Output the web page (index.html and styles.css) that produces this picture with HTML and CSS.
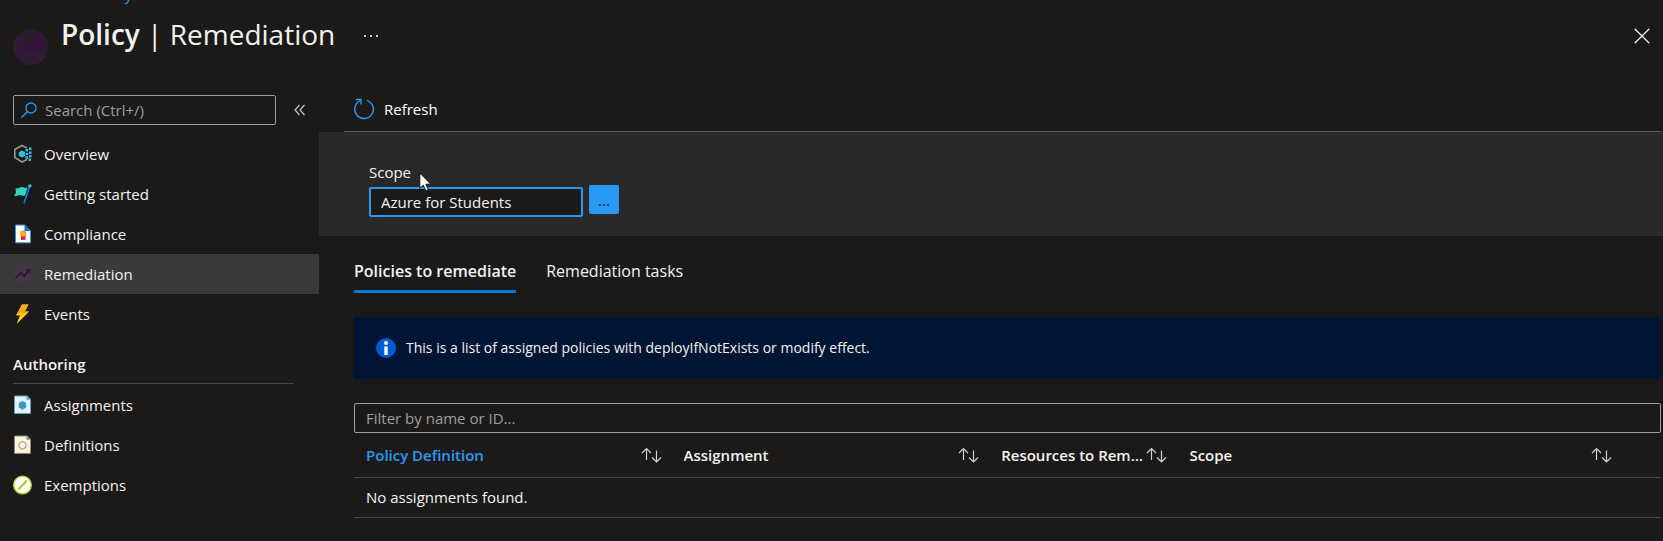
FILE: index.html
```html
<!DOCTYPE html>
<html lang="en">
<head>
<meta charset="utf-8">
<title>Policy | Remediation</title>
<link rel="stylesheet" href="styles.css">
</head>
<body>
<svg class="defs" aria-hidden="true">
  <symbol id="sort" viewBox="0 0 21 16">
    <path d="M5.5 13V1.5M1 6l4.500-4.500L10 6M15.500 3.500V15M11 10.500l4.500 4.500L20 10.500" fill="none" stroke="currentColor" stroke-width="1.200"/>
  </symbol>
</svg>
<div class="page">
  <nav class="crumbs" aria-label="Breadcrumb">
    <a href="#">Home</a><span class="crumb-sep">&gt;</span><a href="#">Policy</a>
  </nav>
  <header class="header">
    <svg class="header-icon" viewBox="0 0 36 36" aria-hidden="true">
      <circle cx="18" cy="18" r="17.500" fill="#2d1c31"/>
      <path d="M5 6A17.500 17.500 0 0 0 30.500 30.500Z" fill="#321b37"/>
      <path d="M6 25l9-9 6 6 8-9" fill="none" stroke="#38123f" stroke-width="3.500"/>
      <path d="M23 9.500h9v9Z" fill="#38123f"/>
    </svg>
    <h1 class="title"><strong>Policy</strong> | Remediation</h1>
    <button class="plain more" type="button" aria-label="More">
      <svg width="16" height="4" viewBox="0 0 16 4"><path d="M1 1h2v2H1zM7 1h2v2H7zM13 1h2v2h-2z" fill="#d0cfce"/></svg>
    </button>
    <button class="plain close" type="button" aria-label="Close">
      <svg width="16" height="16" viewBox="0 0 16 16"><path d="M.7.700l14.600 14.600M15.300.700L.7 15.300" stroke="#f3f2f1" stroke-width="1.300"/></svg>
    </button>
  </header>
  <div class="body">
    <aside class="sidebar">
      <div class="search-row">
        <label class="search">
          <svg width="16" height="16" viewBox="0 0 16 16" aria-hidden="true"><circle cx="10" cy="6" r="5" fill="none" stroke="#2899f5" stroke-width="1.300"/><path d="M6.300 9.700L.5 15.500" stroke="#2899f5" stroke-width="1.500"/></svg>
          <input type="text" placeholder="Search (Ctrl+/)" aria-label="Search">
        </label>
        <button class="plain collapse" type="button" aria-label="Collapse menu">
          <svg width="12" height="12" viewBox="0 0 12 12"><path d="M5.500 1L1 6l4.500 5M10.500 1L6 6l4.500 5" fill="none" stroke="#c8c6c4" stroke-width="1.200"/></svg>
        </button>
      </div>
      <nav class="menu" aria-label="Policy">
        <a class="item" href="#">
          <svg class="icon" viewBox="0 0 20 20" aria-hidden="true"><path d="M14 4L9 1.500 1.800 5.500v8L9 18l5-2.500" fill="none" stroke="#949494" stroke-width="1.600"/><path d="M9 6.500l3.200 1.700v3.600L9 13.500l-3.200-1.700V8.200z" fill="#32bedd"/><path d="M12.500 5h2.500v2.500h-2.500zM16 3.500h2.500V6H16zM16 7.500h2.500V10H16zM13 8.700h2.200v2.200H13zM12.500 12.300h2.500v2.500h-2.500zM16 11h2.500v2.500H16zM15.500 14.500H18V17h-2.500z" fill="#32bedd"/></svg>
          Overview</a>
        <a class="item" href="#">
          <svg class="icon" viewBox="0 0 20 20" aria-hidden="true"><path d="M16.500 2.500L11 19.500" stroke="#1272cd" stroke-width="1.800"/><circle cx="16.800" cy="2" r="1.800" fill="#5ea0ef"/><path d="M2.500 4.300c3 .8 4.500-1.800 7-1.300 2 .5 3 1.200 5 .5l-2.400 8c-2.400.8-3.300-.7-5.300-.6-2 .2-3 1.800-5.800.8L3 8.500z" fill="#32d4ba"/></svg>
          Getting started</a>
        <a class="item" href="#">
          <svg class="icon" viewBox="0 0 20 20" aria-hidden="true"><path d="M2.500 1h9.300L17.500 6.800v12h-15z" fill="#fff" stroke="#3c8fe0"/><path d="M11.500.5L18 7h-6.500z" fill="#0078d4"/><path d="M8 11h4.500v5.500l-1.400-1-.9.800-.9-.8-1.300 1z" fill="#d5233a"/><circle cx="10.200" cy="9.700" r="2.600" fill="#f9be12" stroke="#f08a12"/></svg>
          Compliance</a>
        <a class="item selected" href="#" aria-current="page">
          <svg class="icon" viewBox="0 0 20 20" aria-hidden="true"><circle cx="9.500" cy="10" r="9.500" fill="#46364a"/><path d="M2.500 14l5-5 3.500 3.200L15.500 7" fill="none" stroke="#37123f" stroke-width="2"/><path d="M12.500 5h5v5z" fill="#37123f"/></svg>
          Remediation</a>
        <a class="item" href="#">
          <svg class="icon" viewBox="0 0 20 20" aria-hidden="true"><path d="M9 .5h6.500l-3.800 7h4.300L4 19.500l3.200-8.200H3.200z" fill="#ffc60a"/><path d="M9 .5h6.500l-3.800 7H16l-2.500 2.700H5L3.200 11.300z" fill="#fba919"/><path d="M5 9.200h9.200L4 19.500l3.200-8.200H3.500z" fill="#ffd012"/></svg>
          Events</a>
      </nav>
      <h2 class="group">Authoring</h2>
      <nav class="menu" aria-label="Authoring">
        <a class="item" href="#">
          <svg class="icon" viewBox="0 0 20 20" aria-hidden="true"><path d="M1.500 1h12.700L17.500 4.200v14.300h-16z" fill="#e2f1fa" stroke="#5ba3c4"/><path d="M13.500 1v3.800h4z" fill="#5ba3c4"/><path d="M9.500 6l3.700 2v4.500l-3.700 2.200-3.700-2.200V8z" fill="#3999c6"/></svg>
          Assignments</a>
        <a class="item" href="#">
          <svg class="icon" viewBox="0 0 20 20" aria-hidden="true"><path d="M1.500 1h12.700L17.500 4.200v14.300h-16z" fill="#fdf3dc" stroke="#88867f"/><path d="M13.500 1v3.800h4z" fill="#88867f"/><path d="M9.500 6.500l3.300 1.800v4L9.500 14.300l-3.300-2v-4z" fill="none" stroke="#aaa498" stroke-width="1.200"/></svg>
          Definitions</a>
        <a class="item" href="#">
          <svg class="icon" viewBox="0 0 20 20" aria-hidden="true"><circle cx="9.500" cy="10" r="8.800" fill="#fff" stroke="#b4d330" stroke-width="1.400"/><path d="M6 13.800l7.200-7.500" stroke="#a9cc2b" stroke-width="2.300" stroke-linecap="round"/></svg>
          Exemptions</a>
      </nav>
    </aside>
    <main class="main">
      <div class="toolbar">
        <button class="plain refresh" type="button">
          <svg width="22" height="22" viewBox="0 0 22 22" aria-hidden="true"><path d="M13.800 2.300A9.300 9.300 0 1 1 7.300 2.700" fill="none" stroke="#2899f5" stroke-width="1.400"/><path d="M3 1.500h5v5" fill="none" stroke="#2899f5" stroke-width="1.400"/></svg>
          Refresh</button>
      </div>
      <section class="scope">
        <div class="field">
          <label for="scope">Scope</label>
          <input id="scope" type="text" value="Azure for Students">
        </div>
        <button class="browse" type="button">...</button>
        <svg class="cursor" width="14" height="20" viewBox="0 0 14 20" aria-hidden="true"><path d="M.8 1v15.500l3.400-3.300 2.500 5.600 2.700-1.200-2.500-5.400h4.900z" fill="#fff" stroke="#111"/></svg>
      </section>
      <div class="content">
        <div class="tabs" role="tablist">
          <button class="tab active" type="button" role="tab" aria-selected="true">Policies to remediate</button>
          <button class="tab" type="button" role="tab" aria-selected="false">Remediation tasks</button>
        </div>
        <div class="info">
          <svg width="20" height="20" viewBox="0 0 20 20" aria-hidden="true"><circle cx="10" cy="10" r="10" fill="#015cda"/><circle cx="10" cy="5" r="2" fill="#fff"/><path d="M8.300 8.500h3.400V17H8.300z" fill="#fff"/></svg>
          <span>This is a list of assigned policies with deployIfNotExists or modify effect.</span>
        </div>
        <input class="filter" type="text" placeholder="Filter by name or ID..." aria-label="Filter by name or ID">
        <table class="grid">
          <colgroup><col class="c1"><col class="c2"><col class="c3"><col class="c4"><col></colgroup>
          <thead>
            <tr>
              <th class="sorted"><div class="head"><span>Policy Definition</span><svg class="sort"><use href="#sort"/></svg></div></th>
              <th><div class="head"><span>Assignment</span><svg class="sort"><use href="#sort"/></svg></div></th>
              <th><div class="head"><span>Resources to Remediate</span><svg class="sort"><use href="#sort"/></svg></div></th>
              <th><div class="head"><span>Scope</span><svg class="sort"><use href="#sort"/></svg></div></th>
              <th></th>
            </tr>
          </thead>
          <tbody><tr><td colspan="5">No assignments found.</td></tr></tbody>
        </table>
      </div>
    </main>
  </div>
</div>
</body>
</html>
```
FILE: styles.css
```css
* { box-sizing: border-box; }
body {
  margin: 0;
  background: #1b1a19;
  color: #f3f2f1;
  font: 15px/20px "Segoe UI", "Open Sans", sans-serif;
}
input, button { font: inherit; color: inherit; }
input::placeholder { color: #a19f9d; opacity: 1; }
a { color: inherit; text-decoration: none; }
.defs { display: none; }
.page { overflow: hidden; }
.plain { background: none; border: 0; padding: 0; display: flex; align-items: center; }

.crumbs { display: flex; gap: 14px; margin-top: -16px; padding-left: 13px; color: #2899f5; }
.crumb-sep { color: #a19f9d; }

.header { display: flex; align-items: center; height: 91px; padding: 0 13px 29px; }
.header-icon { width: 36px; height: 36px; margin-top: 24px; }
.title { margin: 0 0 2px 12px; font-size: 28px; line-height: 40px; font-weight: 400; }
.title strong { font-weight: 600; }
.more { margin: 2px 0 0 28px; }
.close { margin: 2px 0 0 auto; }

.body { display: flex; }
.sidebar { width: 319px; flex: none; }
.search-row { display: flex; align-items: center; gap: 18px; padding: 0 0 9px 13px; }
.search { display: flex; align-items: center; gap: 8px; width: 263px; height: 30px; padding: 0 7px; border: 1px solid #a19f9d; border-radius: 2px; }
.search input { flex: 1; min-width: 0; background: none; border: 0; padding: 0; outline: 0; }
.item { display: flex; align-items: center; gap: 11px; height: 40px; padding-left: 13px; }
.selected { background: #3b3a39; }
.icon { width: 20px; height: 20px; }
.group { margin: 20px 25px 1px 13px; padding-bottom: 8px; border-bottom: 1px solid #484644; font-size: 15px; line-height: 21px; font-weight: 600; }

.main { flex: 1; min-width: 0; }
.toolbar { display: flex; height: 37px; margin: 0 2px 0 25px; padding: 0 0 8px 9px; border-bottom: 1px solid #605e5c; }
.refresh { gap: 9px; color: #fff; }

.scope { position: relative; display: flex; align-items: flex-end; gap: 6px; padding: 30px 50px 19px; background: #292929; }
.field { display: flex; flex-direction: column; gap: 5px; }
.field input { width: 214px; height: 30px; padding: 0 10px; background: #1b1a19; border: 2px solid #2899f5; border-radius: 2px; outline: 0; }
.browse { width: 30px; height: 29px; margin-bottom: 3px; padding: 0; background: #2899f5; color: #1b1a19; border: 0; border-radius: 2px; }
.cursor { position: absolute; left: 100px; top: 40px; }

.content { padding: 24px 2px 0 35px; }
.tabs { display: flex; gap: 30px; font-size: 16px; line-height: 22px; }
.tab { padding: 0 0 8px; background: none; border: 0; border-bottom: 3px solid transparent; }
.active { font-weight: 600; border-bottom-color: #0078d4; }
.info { display: flex; align-items: center; gap: 10px; margin-top: 24px; padding: 21px 22px; background: #001433; border-radius: 2px; font-size: 14px; }
.filter { display: block; width: 100%; height: 30px; margin-top: 24px; padding: 0 11px; background: none; border: 1px solid #a19f9d; border-radius: 2px; outline: 0; }

.grid { width: 100%; table-layout: fixed; border-collapse: collapse; }
.c1, .c2 { width: 24.3%; }
.c3 { width: 14.4%; }
.c4 { width: 34%; }
.grid th, .grid td { padding: 0 10px 0 12px; text-align: left; border-bottom: 1px solid #484644; }
.grid th { height: 44px; font-weight: 600; }
.grid td { height: 40px; }
.sorted { color: #2899f5; }
.head { display: flex; align-items: center; }
.head span { flex: 1; min-width: 0; overflow: hidden; white-space: nowrap; text-overflow: ellipsis; }
.sort { width: 21px; height: 16px; flex: none; color: #d2d0ce; }
```
